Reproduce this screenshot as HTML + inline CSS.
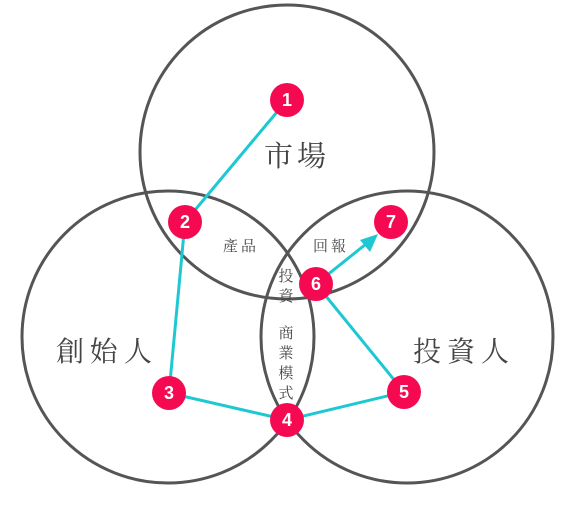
<!DOCTYPE html>
<html><head><meta charset="utf-8"><style>
html,body{margin:0;padding:0;background:#fff;}
svg{display:block}
text{font-family:"Liberation Serif","Noto Serif CJK TC","Noto Serif CJK SC",serif;fill:#444;}
.n{font-family:"Liberation Sans",sans-serif;font-weight:bold;fill:#fff;font-size:18px;}
</style></head><body>
<svg width="579" height="509" viewBox="0 0 579 509" xmlns="http://www.w3.org/2000/svg">
<g fill="none" stroke="#555" stroke-width="3">
<circle cx="287" cy="152" r="147"/>
<circle cx="168" cy="337" r="146"/>
<circle cx="407" cy="337" r="146"/>
</g>
<g stroke="#1ec8d2" stroke-width="3" fill="none">
<polyline points="287,100 185,222 169,393 287,420 404,392 316,284"/>
<line x1="316" y1="284" x2="366" y2="244"/>
</g>
<polygon points="378,234 360,240 370,252" fill="#1ec8d2"/>
<text x="297" y="166" font-size="29" text-anchor="middle" letter-spacing="4">市場</text>
<text x="107" y="361" font-size="28" text-anchor="middle" letter-spacing="6">創始人</text>
<text x="464" y="361" font-size="28" text-anchor="middle" letter-spacing="6">投資人</text>
<text x="241" y="251" font-size="15" text-anchor="middle" letter-spacing="3">產品</text>
<text x="331" y="251" font-size="15" text-anchor="middle" letter-spacing="3">回報</text>
<g font-size="15" text-anchor="middle">
<text x="286" y="281">投</text><text x="286" y="301">資</text>
<text x="286" y="338">商</text><text x="286" y="358">業</text><text x="286" y="378">模</text><text x="286" y="398">式</text>
</g>
<g fill="#f50a52">
<circle cx="287" cy="100" r="17"/><circle cx="185" cy="222" r="17"/>
<circle cx="169" cy="393" r="17"/><circle cx="287" cy="420" r="17"/>
<circle cx="404" cy="392" r="17"/><circle cx="316" cy="284" r="17"/>
<circle cx="391" cy="222" r="17"/>
</g>
<g class="n" text-anchor="middle">
<text class="n" x="287" y="106">1</text><text class="n" x="185" y="228">2</text>
<text class="n" x="169" y="399">3</text><text class="n" x="287" y="426">4</text>
<text class="n" x="404" y="398">5</text><text class="n" x="316" y="290">6</text>
<text class="n" x="391" y="228">7</text>
</g>
</svg>
</body></html>
